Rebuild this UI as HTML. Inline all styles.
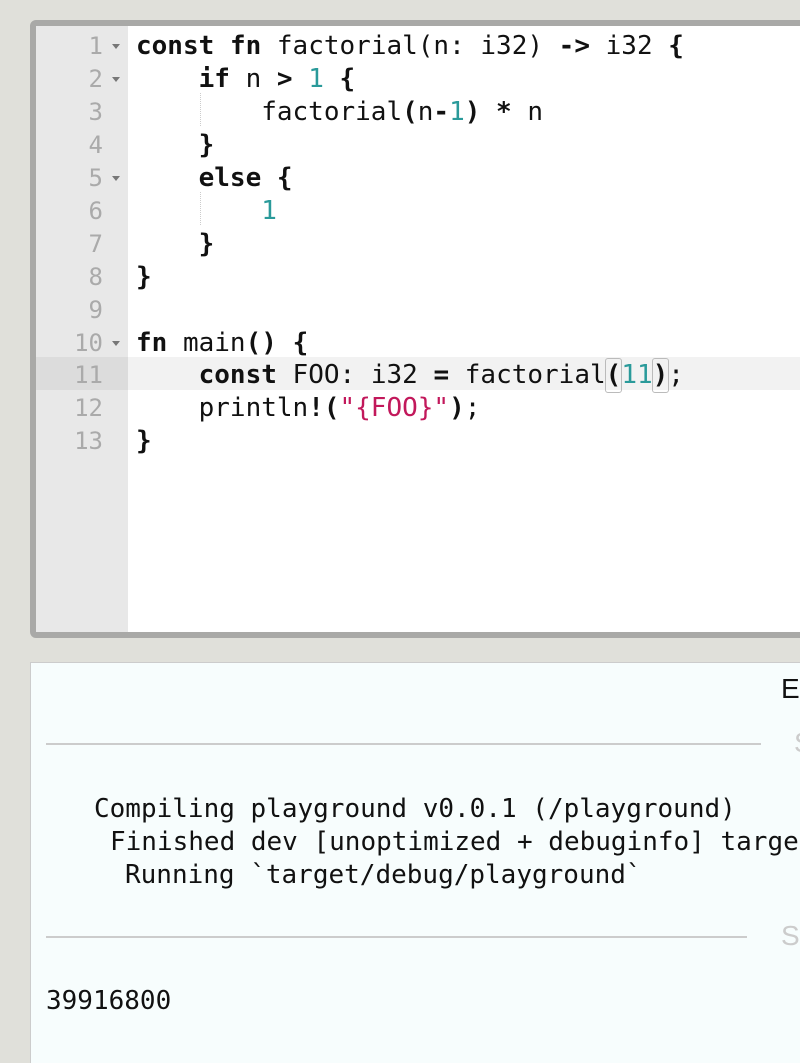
<!DOCTYPE html>
<html><head><meta charset="utf-8"><style>
body{margin:0;width:800px;height:1043px;background:#e0e0da;overflow:hidden;position:relative;font-family:"DejaVu Sans Mono","Liberation Mono",monospace;}
#ed{position:absolute;left:30px;top:20px;width:790px;height:606px;border:6px solid #a9a9a7;border-radius:6px;background:#fff;overflow:hidden}
#gut{position:absolute;left:0;top:0;width:92px;height:100%;background:#e8e8e8}
.ln{position:absolute;left:0;width:67px;text-align:right;color:#aaa;font-size:24px;height:33px;line-height:33px}
.ar{position:absolute;left:76px;width:0;height:0;border-left:4px solid transparent;border-right:4px solid transparent;border-top:5px solid #777}
.cl{position:absolute;left:100px;white-space:pre;font-size:26px;height:33px;line-height:33px;color:#111}
b{font-weight:bold}
.n{color:#2a9a9a}.s{color:#c2185b}
.hl{position:absolute;left:0;width:800px;top:331px;height:33px;background:#f2f2f2}
.hg{position:absolute;left:0;width:92px;top:331px;height:33px;background:#dcdcdc}
.g{position:absolute;border-left:1px dotted #ccc;width:0}
.br{display:inline-block;outline:1px solid #bbb;border-radius:2px}
#out{position:absolute;left:30px;top:662px;width:780px;height:400px;background:#f7fdfd;border-top:1px solid #ccc;border-left:1px solid #ccc}
.o{position:absolute;white-space:pre;font-size:26px;line-height:33px;color:#111}
.hr{position:absolute;height:2px;background:#ccc}
.lb{position:absolute;font-family:"Liberation Sans",sans-serif;font-size:28px;color:#111}
</style></head><body>
<div id="ed">
<div id="gut"></div>
<div class="hl"></div><div class="hg"></div>
<div class="g" style="left:164px;top:67px;height:33px"></div>
<div class="g" style="left:164px;top:166px;height:33px"></div>
<div class="ln" style="top:4px">1</div><div class="ar" style="top:18px"></div>
<div class="ln" style="top:37px">2</div><div class="ar" style="top:51px"></div>
<div class="ln" style="top:70px">3</div>
<div class="ln" style="top:103px">4</div>
<div class="ln" style="top:136px">5</div><div class="ar" style="top:150px"></div>
<div class="ln" style="top:169px">6</div>
<div class="ln" style="top:202px">7</div>
<div class="ln" style="top:235px">8</div>
<div class="ln" style="top:268px">9</div>
<div class="ln" style="top:301px">10</div><div class="ar" style="top:315px"></div>
<div class="ln" style="top:333px">11</div>
<div class="ln" style="top:366px">12</div>
<div class="ln" style="top:399px">13</div>
<div class="cl" style="top:4px"><b>const</b> <b>fn</b> factorial(n: i32) <b>-&gt;</b> i32 <b>{</b></div>
<div class="cl" style="top:37px">    <b>if</b> n <b>&gt;</b> <span class="n">1</span> <b>{</b></div>
<div class="cl" style="top:70px">        factorial<b>(</b>n<b>-</b><span class="n">1</span><b>)</b> <b>*</b> n</div>
<div class="cl" style="top:103px">    <b>}</b></div>
<div class="cl" style="top:136px">    <b>else</b> <b>{</b></div>
<div class="cl" style="top:169px">        <span class="n">1</span></div>
<div class="cl" style="top:202px">    <b>}</b></div>
<div class="cl" style="top:235px"><b>}</b></div>
<div class="cl" style="top:301px"><b>fn</b> main<b>()</b> <b>{</b></div>
<div class="cl" style="top:333px">    <b>const</b> FOO: i32 <b>=</b> factorial<b class="br">(</b><span class="n">11</span><b class="br">)</b>;</div>
<div class="cl" style="top:366px">    println<b>!(</b><span class="s">"{FOO}"</span><b>)</b>;</div>
<div class="cl" style="top:399px"><b>}</b></div>
</div>
<div id="out">
<div class="lb" style="left:750px;top:10px">Ex</div>
<div class="hr" style="left:15px;top:80px;width:715px"></div>
<div class="lb" style="left:763px;top:64px;color:#ccc">S</div>
<div class="o" style="left:63px;top:130px">Compiling playground v0.0.1 (/playground)</div>
<div class="o" style="left:79px;top:163px">Finished dev [unoptimized + debuginfo] target</div>
<div class="o" style="left:94px;top:196px">Running `target/debug/playground`</div>
<div class="hr" style="left:15px;top:273px;width:701px"></div>
<div class="lb" style="left:750px;top:257px;color:#ccc">St</div>
<div class="o" style="left:15px;top:322px">39916800</div>
</div>
</body></html>
